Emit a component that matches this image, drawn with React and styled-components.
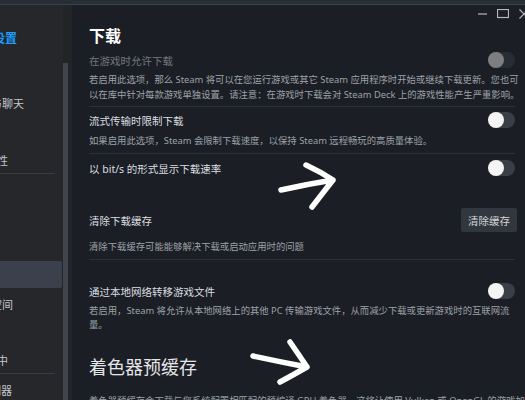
import React from "react";
import styled, { createGlobalStyle } from "styled-components";

const GlobalStyle = createGlobalStyle`
  html, body {
    margin: 0;
    padding: 0;
    background: #1b1e25;
    overflow: hidden;
  }
  body {
    font-family: "Noto Sans", "Noto Sans CJK SC", sans-serif;
  }
`;

const navItems = [
  { label: "设置", shift: -7, mt: 23, accent: true },
  { label: "好友与聊天", shift: -31, mt: 45 },
  { label: "兼容性", shift: -25, mt: 37 },
  { divider: true, mt: 3 },
  { label: "下载", shift: -40, mt: 87, selected: true },
  { label: "存储空间", shift: -31, mt: 6 },
  { label: "游戏中", shift: -25, mt: 36 },
  { divider: true, mt: 3 },
  { label: "控制器", shift: -21, mt: 6 },
];

const Toggle = ({ faded }) => (
  <ToggleTrack $faded={faded}>
    <ToggleKnob />
  </ToggleTrack>
);

const App = () => (
  <>
    <GlobalStyle />
    <Frame>
      <TopStrip />
      <Body>
        <Sidebar>
          {navItems.map((item, i) =>
            item.divider ? (
              <SideDivider key={i} $mt={item.mt} />
            ) : (
              <SideItem key={i} $mt={item.mt} $selected={item.selected}>
                <SideLabel $shift={item.shift} $accent={item.accent}>
                  {item.label}
                </SideLabel>
              </SideItem>
            )
          )}
        </Sidebar>
        <ScrollTrack>
          <Thumb />
        </ScrollTrack>
        <Main>
          <TitleBar>
            <WinButton width="9" height="2" viewBox="0 0 9 2">
              <line x1="0" y1="1" x2="9" y2="1" />
            </WinButton>
            <WinButton width="12" height="10" viewBox="0 0 12 10">
              <rect x="0.5" y="0.5" width="11" height="8" />
            </WinButton>
            <WinButton width="10" height="10" viewBox="0 0 10 10">
              <line x1="0.5" y1="0.5" x2="9.5" y2="9.5" />
              <line x1="9.5" y1="0.5" x2="0.5" y2="9.5" />
            </WinButton>
          </TitleBar>

          <Heading>下载</Heading>

          <Row $mt={5}>
            <RowTitle $faded>在游戏时允许下载</RowTitle>
            <Toggle faded />
          </Row>
          <Desc $mt={4}>
            若启用此选项，那么 Steam 将可以在您运行游戏或其它 Steam 应用程序时开始或继续下载更新。您也可
            <br />
            以在库中针对每款游戏单独设置。请注意：在游戏时下载会对 Steam Deck 上的游戏性能产生严重影响。
          </Desc>
          <Divider $mt={4} />

          <Row $mt={5}>
            <RowTitle>流式传输时限制下载</RowTitle>
            <Toggle />
          </Row>
          <Desc $mt={5}>
            如果启用此选项，Steam 会限制下载速度，以保持 Steam 远程畅玩的高质量体验。
          </Desc>
          <Divider $mt={5} />

          <Row $mt={6}>
            <RowTitle>以 bit/s 的形式显示下载速率</RowTitle>
            <Toggle />
          </Row>

          <Row $mt={32}>
            <RowTitle>清除下载缓存</RowTitle>
            <ActionButton>清除缓存</ActionButton>
          </Row>
          <Desc $mt={7}>清除下载缓存可能能够解决下载或启动应用时的问题</Desc>
          <Divider $mt={5} />

          <Row $mt={23}>
            <RowTitle>通过本地网络转移游戏文件</RowTitle>
            <Toggle />
          </Row>
          <Desc $mt={5} $tight>
            若启用，Steam 将允许从本地网络上的其他 PC 传输游戏文件，从而减少下载或更新游戏时的互联网流
            <br />
            量。
          </Desc>

          <SectionTitle>着色器预缓存</SectionTitle>
          <Desc $mt={14}>
            着色器预缓存会下载与您系统配置相匹配的预编译 GPU 着色器。这将让使用 Vulkan 或 OpenGL 的游戏加载更快
          </Desc>
        </Main>
      </Body>

      <Annotations width="525" height="400" viewBox="0 0 525 400">
        <path d="M281 190 Q308 184 333 180 M306 165 Q321 172 333 180 Q322 194 312 207" />
        <path d="M253 356 Q281 362 307 367 M290 342 Q299 355 307 367 Q293 375 280 382" />
      </Annotations>
    </Frame>
  </>
);

const Frame = styled.div`
  position: relative;
  width: 525px;
  height: 400px;
  display: flex;
  flex-direction: column;
  overflow: hidden;
`;

const TopStrip = styled.div`
  height: 5px;
  box-sizing: border-box;
  background: #2a2d33;
  border-bottom: 1px solid #2d4756;
  flex-shrink: 0;
`;

const Body = styled.div`
  flex: 1;
  display: flex;
  min-height: 0;
`;

const Sidebar = styled.nav`
  width: 63px;
  flex-shrink: 0;
  background: #25272b;
  display: flex;
  flex-direction: column;
  overflow: hidden;
`;

const SideItem = styled.div`
  margin-top: ${(p) => p.$mt}px;
  height: ${(p) => (p.$selected ? 27 : 20)}px;
  width: 62px;
  display: flex;
  align-items: center;
  overflow: hidden;
  flex-shrink: 0;
  background: ${(p) => (p.$selected ? "#3c404c" : "transparent")};
  border-radius: 0 2px 2px 0;
`;

const SideLabel = styled.span`
  margin-left: ${(p) => p.$shift}px;
  white-space: nowrap;
  font-size: ${(p) => (p.$accent ? 12 : 11)}px;
  font-weight: ${(p) => (p.$accent ? 700 : 400)};
  color: ${(p) => (p.$accent ? "#1a9fff" : "#c3c6ca")};
`;

const SideDivider = styled.div`
  margin-top: ${(p) => p.$mt}px;
  width: 55px;
  height: 1px;
  flex-shrink: 0;
  background: #3a3d44;
`;

const ScrollTrack = styled.div`
  width: 9px;
  flex-shrink: 0;
  background: #222428;
  padding-top: 58px;
  box-sizing: border-box;
  display: flex;
`;

const Thumb = styled.div`
  width: 5px;
  background: #41444b;
`;

const Main = styled.main`
  flex: 1;
  background: #1b1e25;
  padding: 0 10px 0 17px;
  display: flex;
  flex-direction: column;
  overflow: hidden;
`;

const TitleBar = styled.div`
  height: 18px;
  margin-right: -14px;
  display: flex;
  justify-content: flex-end;
  align-items: center;
  gap: 10px;
  flex-shrink: 0;
`;

const WinButton = styled.svg`
  fill: none;
  stroke: #b4b8be;
  stroke-width: 1.2;
  flex-shrink: 0;
`;

const Heading = styled.h1`
  margin: 2px 0 0;
  font-size: 16px;
  line-height: 22px;
  font-weight: 700;
  color: #ffffff;
`;

const Row = styled.div`
  margin-top: ${(p) => p.$mt}px;
  display: flex;
  align-items: center;
  justify-content: space-between;
  min-height: 16px;
  flex-shrink: 0;
`;

const RowTitle = styled.span`
  font-size: 10.5px;
  color: #dcdee0;
  white-space: nowrap;
  opacity: ${(p) => (p.$faded ? 0.45 : 1)};
`;

const ToggleTrack = styled.span`
  width: 27px;
  height: 16px;
  border-radius: 8px;
  background: #3a3e47;
  display: flex;
  align-items: center;
  opacity: ${(p) => (p.$faded ? 0.45 : 1)};
`;

const ToggleKnob = styled.span`
  width: 16px;
  height: 16px;
  border-radius: 50%;
  background: #f4f4f4;
`;

const ActionButton = styled.button`
  height: 24px;
  padding: 0 7px;
  margin-right: -2px;
  border: none;
  border-radius: 2px;
  background: #32363e;
  color: #d2d5d8;
  font-family: inherit;
  font-size: 10.5px;
`;

const Desc = styled.p`
  margin: ${(p) => p.$mt}px 0 0;
  font-size: 9.35px;
  line-height: ${(p) => (p.$tight ? 14 : 15)}px;
  color: #9da2a9;
  white-space: nowrap;
  flex-shrink: 0;
`;

const Divider = styled.div`
  margin-top: ${(p) => p.$mt}px;
  height: 1px;
  background: #2c3038;
  flex-shrink: 0;
`;

const SectionTitle = styled.h2`
  margin: 23px 0 0;
  font-size: 18px;
  line-height: 24px;
  font-weight: 400;
  color: #e4e5e7;
  flex-shrink: 0;
`;

const Annotations = styled.svg`
  position: absolute;
  top: 0;
  left: 0;
  pointer-events: none;
  fill: none;
  stroke: #ffffff;
  stroke-width: 5.5;
  stroke-linecap: round;
  stroke-linejoin: round;
`;

export default App;
